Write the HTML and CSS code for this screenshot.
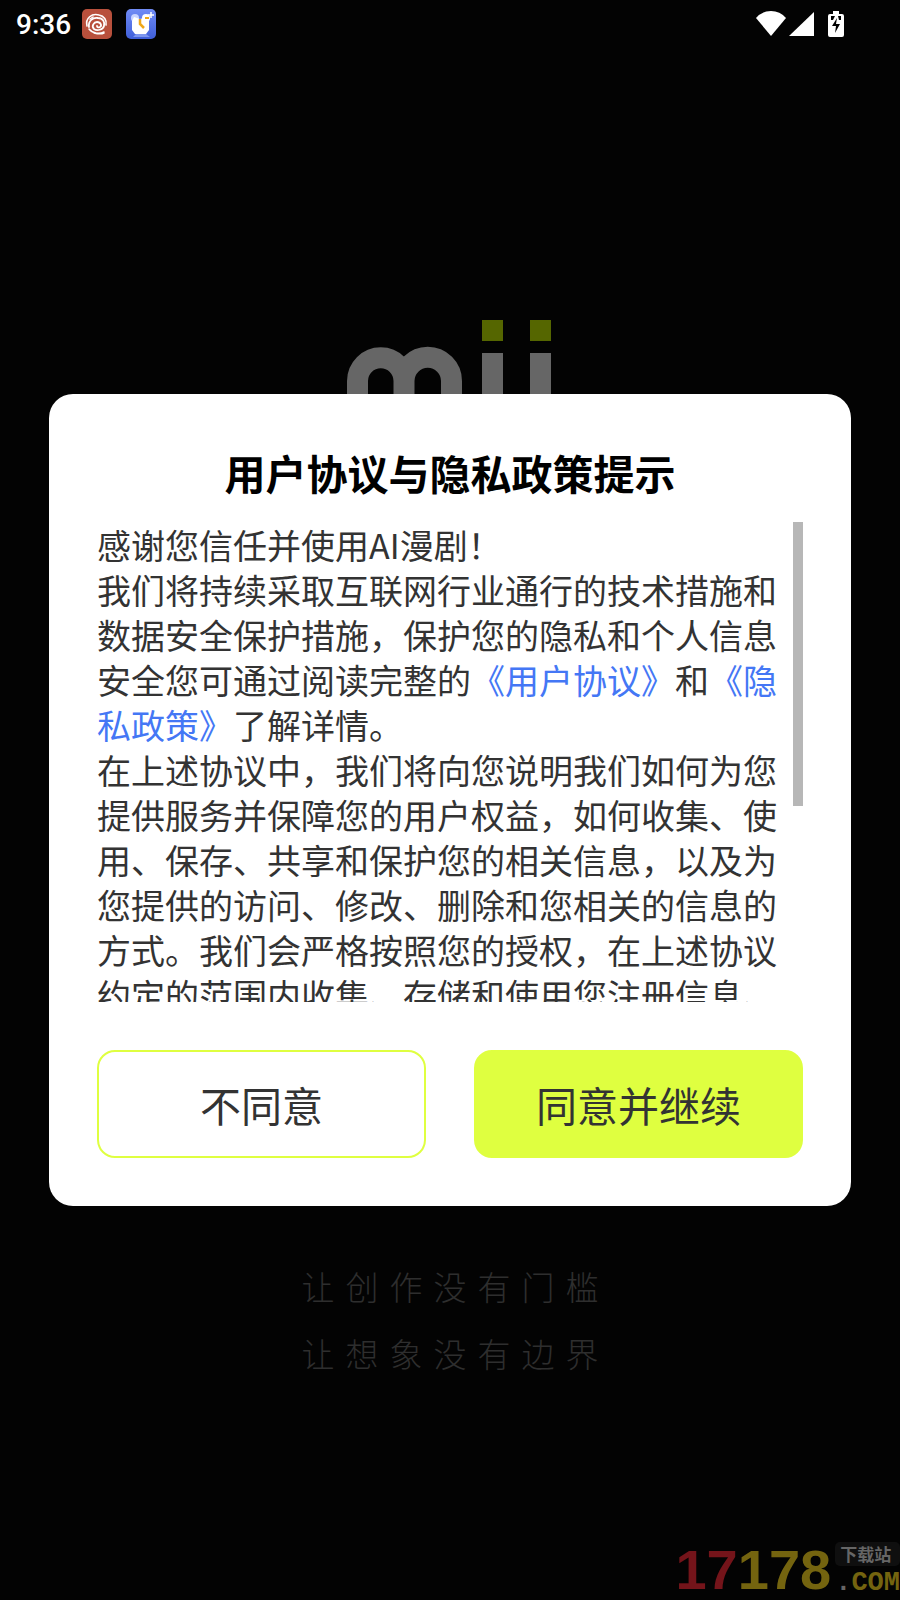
FILE: index.html
```html
<!DOCTYPE html>
<html lang="zh-CN">
<head>
  <meta charset="UTF-8">
  <meta name="viewport" content="width=device-width, initial-scale=1.0">
  <title>用户协议与隐私政策提示</title>
  <link rel="stylesheet" href="styles.css">
</head>
<body>
  <div class="page">
    <header class="statusBar">
      <span class="time">9:36</span>
      <svg class="appIcon" viewBox="0 0 30 30">
        <rect width="30" height="30" rx="5" fill="#b8503c"/>
        <g fill="none" stroke="#fff" stroke-linecap="round">
          <path d="M5 17C3 9 10 4 17 6c5 1 8 5 7 10" stroke-width="1.6"/>
          <path d="M7 18c-1-6 4-10 9-9 5 0 7 4 6 8-1 4-7 5-10 3-3-3 0-7 3-7 4 0 5 4 3 5-2 1-3 0-3-1" stroke-width="1.8"/>
          <path d="M7 20c4 5 11 5 15 3M12 24c4 1 8 1 10 0M8 10l3-2" stroke-width="1.5"/>
        </g>
      </svg>
      <svg class="appIcon" viewBox="0 0 30 30">
        <defs>
          <linearGradient id="clockBg" x2="0" y2="1">
            <stop stop-color="#718cf5"/>
            <stop offset="1" stop-color="#3f5fd9"/>
          </linearGradient>
        </defs>
        <rect width="30" height="30" rx="5" fill="url(#clockBg)"/>
        <path d="M7 28l3-3h10l4 3z" fill="#7d96ef"/>
        <circle cx="9" cy="9" r="4" fill="#c9d4ff"/>
        <circle cx="20" cy="9" r="4" fill="#fff"/>
        <path d="M8 8l6 2 7-2 2 4v9l-3 4H9l-3-4v-9z" fill="#fff"/>
        <path d="M14 10v5l4 4" fill="none" stroke="#f0a818" stroke-width="2.5"/>
        <path d="M19 9h4" stroke="#f0a818" stroke-width="2"/>
        <path d="M25 3v6M22 6h6" stroke="#fff" stroke-width="1.5"/>
      </svg>
      <div class="signals">
        <svg width="30" height="26" viewBox="0 0 30 26">
          <path d="M0 7Q6 0 15 0t15 7L15 25z" fill="#fff"/>
        </svg>
        <svg width="25" height="26" viewBox="0 0 25 26">
          <path d="M25 1v24H0z" fill="#fff"/>
        </svg>
        <svg class="battery" width="16" height="26" viewBox="0 0 16 26">
          <path d="M5 0h6v3h3q2 0 2 2v19q0 2-2 2H2q-2 0-2-2V5q0-2 2-2h3z" fill="#fff"/>
          <path d="M3 5h4L5 9H3zM10 5h3v4h-2zM9 7l-5 8h4l-1 7 5-9H8z" fill="#000"/>
        </svg>
      </div>
    </header>

    <main class="splash">
      <svg class="logo" viewBox="0 0 206 130">
        <path d="M10.5 130V61a23.2 23.2 0 0 1 46.5 0v69M57 130V61a23.7 23.7 0 0 1 47.5 0v69" fill="none" stroke="#666" stroke-width="21"/>
        <path d="M135 33h21v97h-21zM183 33h21v97h-21z" fill="#666"/>
        <path d="M135 0h21v21h-21zM183 0h21v21h-21z" fill="#560"/>
      </svg>
      <div class="slogan">
        <p>让创作没有门槛</p>
        <p>让想象没有边界</p>
      </div>
    </main>

    <footer class="watermark">
      <div class="number"><span>17</span>178</div>
      <div class="site">
        <div class="tag">下载站</div>
        <div class="domain"><span>.</span>COM</div>
      </div>
    </footer>
  </div>

  <div class="mask">
    <section class="dialog" role="dialog" aria-modal="true" aria-labelledby="dialogTitle">
      <h1 id="dialogTitle">用户协议与隐私政策提示</h1>
      <div class="dialogBody">
        <div class="content">
          <p>感谢您信任并使用AI漫剧！</p>
          <p>我们将持续采取互联网行业通行的技术措施和数据安全保护措施，保护您的隐私和个人信息安全您可通过阅读完整的<a href="#agreement">《用户协议》</a>和<a href="#privacy">《隐私政策》</a>了解详情。</p>
          <p>在上述协议中，我们将向您说明我们如何为您提供服务并保障您的用户权益，如何收集、使用、保存、共享和保护您的相关信息，以及为您提供的访问、修改、删除和您相关的信息的方式。我们会严格按照您的授权，在上述协议约定的范围内收集、存储和使用您注册信息、</p>
        </div>
        <div class="scrollThumb"></div>
      </div>
      <div class="operation">
        <button class="refuse" type="button">不同意</button>
        <button class="agree" type="button">同意并继续</button>
      </div>
    </section>
  </div>
</body>
</html>
```
FILE: styles.css
```css
*{
  box-sizing: border-box;
}
body,h1,p{
  margin: 0;
}
body{
  background-color: #030303;
  color: #333;
  font-family: "Noto Sans CJK SC", sans-serif;
}
.page{
  display: flex;
  flex-direction: column;
  min-height: 100vh;
}

/* 状态栏 */
.statusBar{
  display: flex;
  align-items: center;
  height: 48px;
  padding: 0 56px 0 16px;
  color: #fff;
}
.statusBar .time{
  margin-right: 11px;
  font-family: Roboto, sans-serif;
  font-size: 28px;
  font-weight: 500;
}
.appIcon{
  width: 30px;
  height: 30px;
  margin-right: 14px;
}
.signals{
  display: flex;
  align-items: center;
  gap: 3px;
  margin-left: auto;
}
.signals .battery{
  margin-left: 11px;
}

/* 启动页 */
.splash{
  flex: 1;
  display: flex;
  flex-direction: column;
  align-items: center;
  justify-content: space-between;
  padding: 272px 0 133px;
}
.logo{
  width: 206px;
  height: 130px;
}
.slogan{
  color: #2e2e2e;
  font-size: 33px;
  font-weight: 300;
  line-height: 67px;
  letter-spacing: 11px;
  text-indent: 11px;
}

/* 水印 */
.watermark{
  display: flex;
  align-items: flex-end;
  justify-content: flex-end;
  gap: 4px;
  height: 80px;
  font-weight: 700;
}
.watermark .number{
  color: #74640f;
  font-family: "Liberation Sans Narrow", "Liberation Sans", sans-serif;
  font-size: 56px;
  line-height: 60px;
}
.watermark .number span{
  color: #74141a;
}
.watermark .tag{
  padding: 0 5px;
  border-radius: 5px;
  background-color: #0f0f0f;
  color: #666;
  font-size: 17px;
  line-height: 24px;
}
.watermark .domain{
  color: #74640f;
  font-family: "Liberation Mono", monospace;
  font-size: 27px;
  line-height: 34px;
}
.watermark .domain span{
  color: #666;
}

/* 弹窗 */
.mask{
  position: fixed;
  inset: 0;
  display: flex;
  align-items: center;
  justify-content: center;
  padding: 0 49px;
}
.dialog{
  flex: 1;
  padding: 48px;
  border-radius: 24px;
  background-color: #fff;
}
.dialog h1{
  margin-bottom: 20px;
  color: #000;
  font-size: 41px;
  line-height: 60px;
  text-align: center;
}
.dialogBody{
  display: flex;
  justify-content: space-between;
  height: 480px;
}
.dialogBody .content{
  flex: 1;
  margin-right: 16px;
  overflow: hidden;
  font-size: 34px;
  line-height: 45px;
  text-spacing-trim: space-all;
}
.content a{
  color: #4477f5;
  text-decoration: none;
}
.scrollThumb{
  width: 10px;
  height: 284px;
  background-color: #b7b7b7;
}
.operation{
  display: flex;
  gap: 48px;
  margin-top: 48px;
}
.operation button{
  flex: 1;
  height: 108px;
  padding: 0;
  border: 2px solid #dfff40;
  border-radius: 18px;
  background-color: #fff;
  color: #333;
  font-family: inherit;
  font-size: 41px;
  cursor: pointer;
}
.operation .agree{
  background-color: #dfff40;
}
```
